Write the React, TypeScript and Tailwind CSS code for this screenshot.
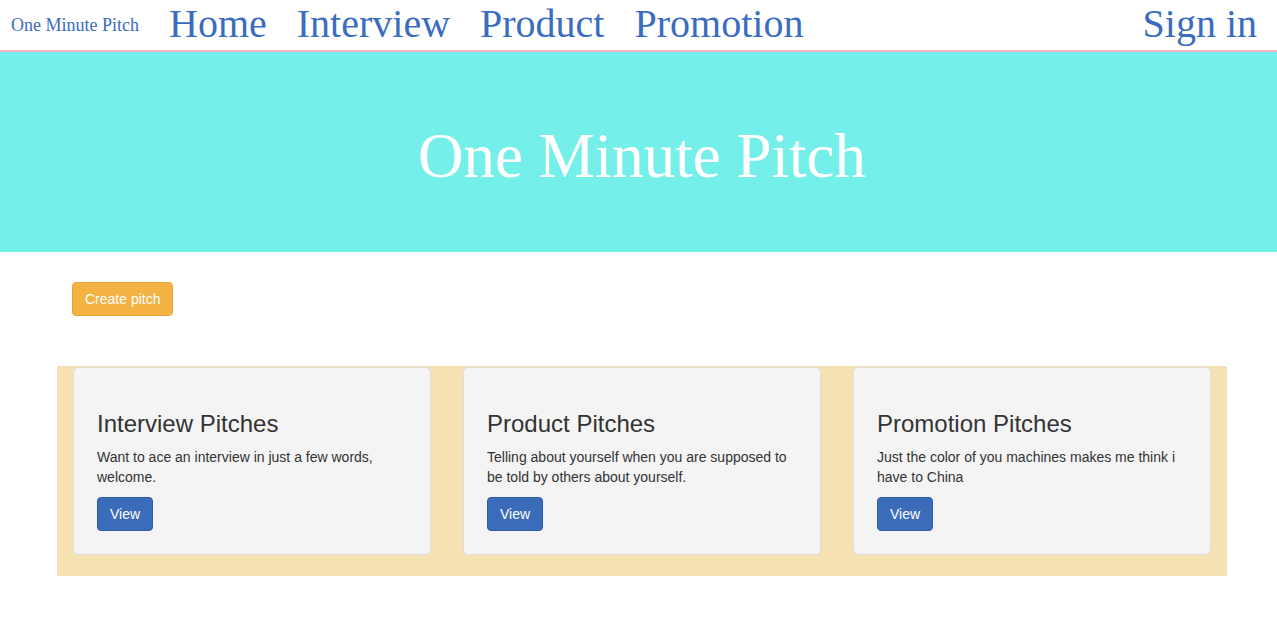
const navLinks = ["Home", "Interview", "Product", "Promotion"];

const pitches = [
  {
    title: "Interview Pitches",
    text: "Want to ace an interview in just a few words, welcome.",
  },
  {
    title: "Product Pitches",
    text: "Telling about yourself when you are supposed to be told by others about yourself.",
  },
  {
    title: "Promotion Pitches",
    text: "Just the color of you machines makes me think i have to China",
  },
];

const serif = "font-['Liberation_Serif',serif]";

const PitchCard = ({ title, text }: { title: string; text: string }) => {
  return (
    <div className="px-[16px]">
      <div className="rounded-[5px] border border-[#dddddd] bg-[#f4f4f4] px-[23px] pb-[23px] pt-[43px]">
        <h3 className="text-[24px] leading-[26.4px] text-[#333333]">{title}</h3>
        <p className="mt-[10px] text-[14px] leading-[20px] text-[#333333]">{text}</p>
        <button className="mt-[10px] rounded-[4px] border border-[#2e5fa8] bg-[#3a6cb9] px-[12px] py-[6px] text-[14px] leading-[20px] text-white">
          View
        </button>
      </div>
    </div>
  );
};

export default function App() {
  return (
    <div className="min-h-[618px] bg-white font-['Liberation_Sans',Arial,sans-serif]">
      <nav className="flex h-[52px] items-start border-b-2 border-[#fbb3c3] pl-[11px] pr-[20px] pt-[3px]">
        <div className="flex items-start gap-[30px]">
          <a className={`${serif} text-[18px] leading-[44px] text-[#3a6cc0]`}>One Minute Pitch</a>
          {navLinks.map((link) => (
            <a key={link} className={`${serif} text-[40px] leading-[41px] text-[#3a6cc0]`}>
              {link}
            </a>
          ))}
        </div>
        <a className={`${serif} ml-auto text-[40px] leading-[41px] text-[#3a6cc0]`}>Sign in</a>
      </nav>

      <header className="h-[200px] bg-[#75efea] pl-[7px] pt-[73px] text-center">
        <h1 className={`${serif} text-[63px] leading-[63px] text-white`}>One Minute Pitch</h1>
      </header>

      <main className="ml-[57px] w-[1170px]">
        <div className="pt-[30px]">
          <button className="ml-[15px] rounded-[4px] border border-[#eea236] bg-[#f4b242] px-[12px] py-[6px] text-[14px] leading-[20px] text-white">
            Create pitch
          </button>
        </div>

        <section className="mt-[50px] grid grid-cols-3 bg-[#f5e1b1] pb-[21px] pt-[1px]">
          {pitches.map((p) => (
            <PitchCard key={p.title} title={p.title} text={p.text} />
          ))}
        </section>
      </main>
    </div>
  );
}
